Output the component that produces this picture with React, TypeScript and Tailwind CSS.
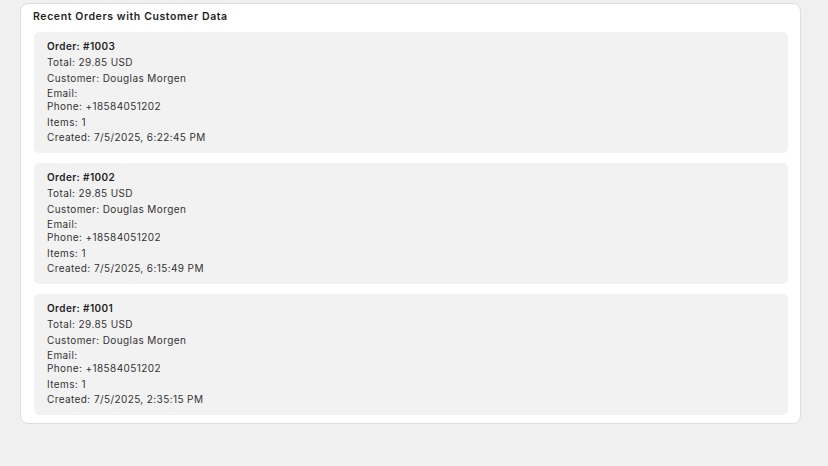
const orders = [
  { id: 1003, total: "29.85 USD", customer: "Douglas Morgen", phone: "+18584051202", items: 1, created: "7/5/2025, 6:22:45 PM" },
  { id: 1002, total: "29.85 USD", customer: "Douglas Morgen", phone: "+18584051202", items: 1, created: "7/5/2025, 6:15:49 PM" },
  { id: 1001, total: "29.85 USD", customer: "Douglas Morgen", phone: "+18584051202", items: 1, created: "7/5/2025, 2:35:15 PM" },
];

function OrderCard({ order }: any) {
  return (
    <div className="bg-[#f2f2f2] rounded-[5px] px-[13px] pt-[8px] pb-[9px] text-[10px] leading-[13px] tracking-[0.4px] text-[#333333]">
      <p className="font-semibold text-[#1f1f1f]">Order: #{order.id}</p>
      <p className="mt-[3px]">Total: {order.total}</p>
      <p className="mt-[3px]">Customer: {order.customer}</p>
      <p className="mt-[2px]">Email: </p>
      <p>Phone: {order.phone}</p>
      <p className="mt-[3px]">Items: {order.items}</p>
      <p className="mt-[2px]">Created: {order.created}</p>
    </div>
  );
}

export default function App() {
  return (
    <div className="min-h-[466px] bg-[#f0f0f0] pt-[3px] pl-[20px] pr-[27px] pb-[40px]" style={{ fontFamily: "Inter, 'Noto Sans', sans-serif" }}>
      <div className="bg-white rounded-[8px] border border-[#dedede] pl-[13px] pr-[12px] pt-[6px] pb-[8px]">
        <h2 className="-ml-px text-[10.5px] leading-[13px] font-semibold tracking-[0.6px] text-[#1f1f1f]">Recent Orders with Customer Data</h2>
        <div className="mt-[9px] flex flex-col gap-[10px]">
          {orders.map((o) => (
            <OrderCard key={o.id} order={o} />
          ))}
        </div>
      </div>
    </div>
  );
}
